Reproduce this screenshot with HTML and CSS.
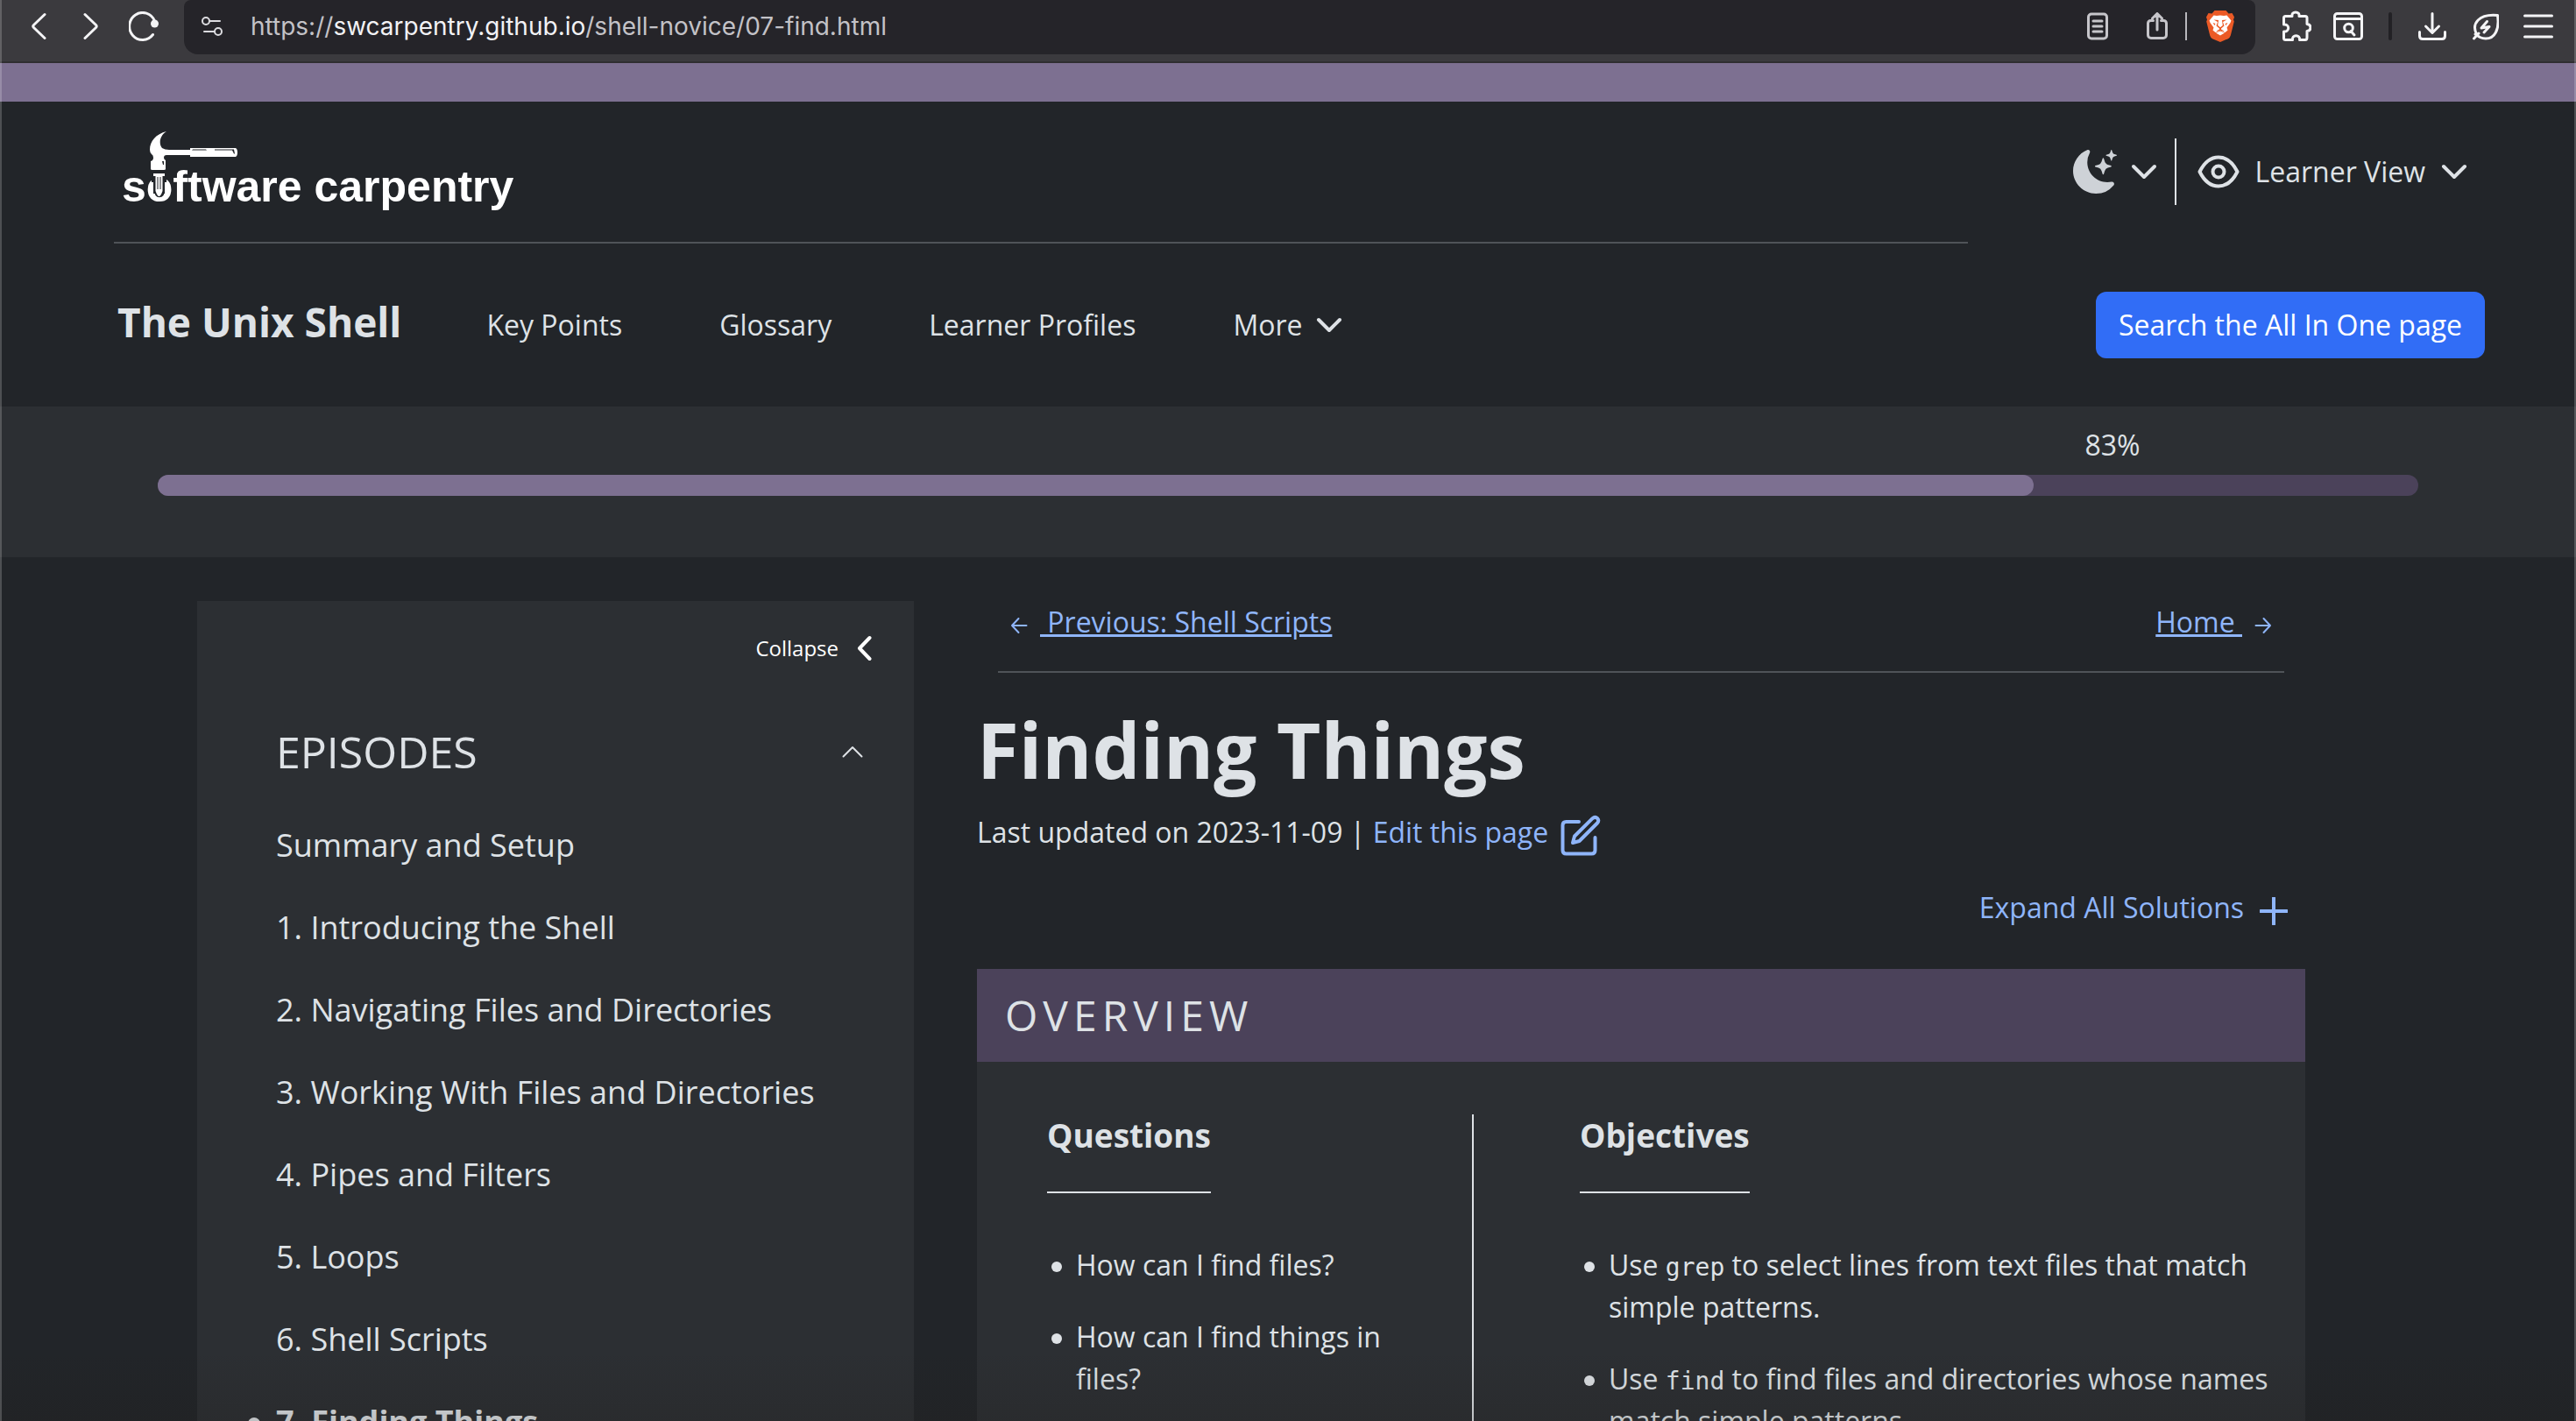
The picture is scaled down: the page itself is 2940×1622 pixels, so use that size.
FILE: index.html
```html
<!DOCTYPE html>
<html lang="en">
<head>
<meta charset="utf-8">
<meta name="viewport" content="width=device-width, initial-scale=1">
<title>The Unix Shell: Finding Things</title>
<link rel="stylesheet" href="styles.css">
</head>
<body>
<div class="window">
  <div class="toolbar">
    <div class="toolbar-nav">
      <button class="tool" aria-label="Back"><svg width="18" height="32" viewBox="0 0 18 32"><path d="M16 2.500 3.500 14.500q-1.500 1.500 0 3L16 29.500"/></svg></button>
      <button class="tool" aria-label="Forward"><svg width="18" height="32" viewBox="0 0 18 32"><path d="M2 2.500 14.500 14.500q1.500 1.500 0 3L2 29.500"/></svg></button>
      <button class="tool" aria-label="Reload"><svg width="34" height="34" viewBox="0 0 34 34"><path d="M27.500 26.500A15 15.500 0 1 1 29.500 11"/><circle class="solid" cx="29.500" cy="14" r="4.500"/></svg></button>
    </div>
    <div class="address">
      <svg class="site" width="24" height="24" viewBox="0 0 24 24" aria-hidden="true"><circle cx="5" cy="6" r="4"/><path d="M9 6h12M3 18h12"/><circle cx="19" cy="18" r="4"/></svg>
      <span class="url">https://<span class="domain">swcarpentry.github.io</span>/shell-novice/07-find.html</span>
      <div class="address-tools">
        <button class="tool dim reader" aria-label="Reader mode"><svg width="24" height="32" viewBox="0 0 24 32"><rect x="1.500" y="2" width="21" height="28" rx="3.500"/><path d="M7 10h10M7 16h10M7 22h10"/></svg></button>
        <button class="tool dim share" aria-label="Share"><svg width="24" height="32" viewBox="0 0 24 32"><path d="M7.500 9.500H4.500a3 3 0 0 0-3 3v13.500a3.500 3.500 0 0 0 3.500 3.500h14a3.500 3.500 0 0 0 3.500-3.500V12.500a3 3 0 0 0-3-3h-3M12 20V1.500M6.500 7 12 1.500 17.500 7"/></svg></button>
        <span class="rule-light"></span>
        <button class="tool brave" aria-label="Brave Shields"><svg width="32" height="36" viewBox="0 0 32 36"><path fill="#eb5a26" d="M9.500 0h13l3 3.500 4-.5L32 7.500l-1 3 .8 2-4 16Q27 31 25 32.200L16 36l-9-3.800Q5 31 4.200 28.500l-4-16 .8-2-1-3L2.500 3l4 .5z"/><path fill="#fff" d="M8.500 5.500 12 6l4-.5 4 .5 3.500-.5 5 6-1 2.500-4 5.500 1 3-3 2.500-3.300-1.200L16 22l-2.200 1.800-3.300 1.200-3-2.500 1-3-4-5.500-1-2.500z"/><path fill="#fff" d="M16 23.500 21 25.500 16 28.500 11 25.500z"/><path fill="#eb5a26" d="M8.500 10.500 14 11l-.8 6 2.800 2.200L18.800 17l-.8-6 5.500-.5L19 13l1.500 4.500L17 20.500v1L20 23l-.5.800L16 22.500l-3.500 1.300L12 23l3-1.500v-1l-3.500-3L13 13zM7.500 14l3 1-1 2zM24.500 14l-3 1 1 2z"/></svg></button>
      </div>
    </div>
    <div class="toolbar-end">
      <button class="tool puzzle" aria-label="Extensions"><svg width="34" height="36" viewBox="0 0 34 36"><path d="M2.500 8.500q0-2 2-2h7.500c-.5-2.500 1-4.500 4-4.500s4.500 2 4 4.500h7q2 0 2 2v7c2.500.200 4 1.800 4 4s-1.500 3.800-4 4v7q0 3-2 3h-6.500c.5-3-1.500-4.800-4-4.800s-4.500 1.800-4 4.800h-8q-2 0-2-2v-7.500c3 .5 5.200-1.500 5.200-4s-2.200-4.500-5.200-4z"/></svg></button>
      <button class="tool tabsearch" aria-label="Search tabs"><svg width="34" height="32" viewBox="0 0 34 32"><rect x="1.500" y="1.500" width="31" height="29" rx="3"/><path d="M2 7.500h30M20 21.500l4 4.500"/><circle cx="17.500" cy="18" r="4.800"/></svg></button>
      <span class="rule-dark"></span>
      <button class="tool download" aria-label="Downloads"><svg width="32" height="32" viewBox="0 0 32 32"><path d="M16 1.500V23M8.500 16 16 23.500 23.500 16M1.500 22.500V27q0 3.500 3.500 3.500h22q3.500 0 3.500-3.500v-4.500"/></svg></button>
      <button class="tool leaf" aria-label="Energy saver"><svg width="30" height="32" viewBox="0 0 30 32"><path d="M28.500 3.500C31 20 25 30 15 30 10 30 6.500 28 4.500 25-1.500 13 7 1.500 28.500 3.500zM7 24l-5.500 6M3 25l4.500 3"/><path d="M16.500 10.500 10 18l9-1.500-6 6.500"/></svg></button>
      <button class="tool menu" aria-label="Menu"><svg width="34" height="28" viewBox="0 0 34 28"><path d="M1.500 2h31M1.500 14h31M1.500 26h31"/></svg></button>
    </div>
  </div>

  <div class="page">
    <div class="band"></div>
    <header class="header">
      <div class="header-top">
        <a class="logo" href="#" aria-label="Software Carpentry">
          <svg width="480" height="100" viewBox="130 146 480 100">
            <text x="139" y="230">software carpentry</text>
            <path class="cut" d="M173 196h17v12h-2v13h-13v-13h-2z"/>
            <path class="fill" d="M175 198h13v3h-2.500v17q-2 6-4 6t-4-6v-17H175z"/>
            <path class="cut" d="M179.500 202h1v14h-1zM182.500 202h1v14h-1z"/>
            <path class="fill" d="M190 150c-8 5-9 14-5 19q3 2 8 2h24v-2h52q2 1 2 5t-2 5h-52v-2h-27q-3 0-3 3 0 2 2 3v10q0 1-2 1h-13q-2 0-2-1v-9q3-1 3-4 0-3-2-4-2-2-2-5c0-10 7-18 19-21z"/>
            <path class="cut" d="M220 170.500h15l1 1h-17zM245 170.500h22l1 5h-1l-2-4h-20zM185 184h2v4h-1z"/>
          </svg>
        </a>
        <div class="controls">
          <button class="control theme" aria-label="Toggle theme">
            <svg class="moon" width="50" height="50" viewBox="0 0 16 16"><path d="M6 .278a.77.770 0 0 1 .080.858 7.200 7.200 0 0 0-.878 3.460c0 4.021 3.278 7.277 7.318 7.277q.792-.001 1.533-.160a.79.790 0 0 1 .810.316.73.730 0 0 1-.031.893A8.350 8.350 0 0 1 8.344 16C3.734 16 0 12.286 0 7.710 0 4.266 2.114 1.312 5.124.060A.75.750 0 0 1 6 .278"/><path d="M10.794 3.148a.217.217 0 0 1 .412 0l.387 1.162c.173.518.579.924 1.097 1.097l1.162.387a.217.217 0 0 1 0 .412l-1.162.387a1.730 1.730 0 0 0-1.097 1.097l-.387 1.162a.217.217 0 0 1-.412 0l-.387-1.162A1.730 1.730 0 0 0 9.310 6.593l-1.162-.387a.217.217 0 0 1 0-.412l1.162-.387a1.730 1.730 0 0 0 1.097-1.097zM13.863.099a.145.145 0 0 1 .274 0l.258.774c.115.346.386.617.732.732l.774.258a.145.145 0 0 1 0 .274l-.774.258a1.160 1.160 0 0 0-.732.732l-.258.774a.145.145 0 0 1-.274 0l-.258-.774a1.160 1.160 0 0 0-.732-.732l-.774-.258a.145.145 0 0 1 0-.274l.774-.258c.346-.115.617-.386.732-.732z"/></svg>
            <svg class="chevron" width="30" height="20" viewBox="0 0 30 20"><path d="M3 4 15 16 27 4"/></svg>
          </button>
          <span class="divider"></span>
          <button class="control view">
            <svg class="eye" width="48" height="38" viewBox="0 0 48 38"><path d="M2.500 19C8 8 15 2.500 24 2.500S40 8 45.500 19C40 30 33 35.500 24 35.500S8 30 2.500 19z"/><circle cx="24" cy="19" r="6.500"/></svg>
            <span>Learner View</span>
            <svg class="chevron" width="30" height="20" viewBox="0 0 30 20"><path d="M3 4 15 16 27 4"/></svg>
          </button>
        </div>
      </div>
      <hr class="header-rule">
      <nav class="header-nav">
        <a class="lesson" href="#">The Unix Shell</a>
        <div class="links">
          <a href="#">Key Points</a>
          <a href="#">Glossary</a>
          <a href="#">Learner Profiles</a>
          <button class="control more"><span>More</span><svg class="chevron" width="30" height="20" viewBox="0 0 30 20"><path d="M3 4 15 16 27 4"/></svg></button>
        </div>
        <button class="search">Search the All In One page</button>
      </nav>
    </header>

    <div class="progress">
      <div class="percent">83%</div>
      <div class="bar" role="progressbar" aria-valuenow="83" aria-valuemin="0" aria-valuemax="100" aria-label="Lesson progress"><div class="bar-fill" style="width:83%"></div></div>
    </div>

    <div class="columns">
      <aside class="sidebar">
        <button class="collapse"><span>Collapse</span><svg width="18" height="30" viewBox="0 0 18 30"><path d="M15.500 3 4 15 15.500 27"/></svg></button>
        <button class="episodes"><span>EPISODES</span><svg width="24" height="14" viewBox="0 0 24 14"><path d="M1.500 12.500 12 2 22.500 12.500"/></svg></button>
        <ul class="chapters">
          <li><a href="#">Summary and Setup</a></li>
          <li><a href="#">1. Introducing the Shell</a></li>
          <li><a href="#">2. Navigating Files and Directories</a></li>
          <li><a href="#">3. Working With Files and Directories</a></li>
          <li><a href="#">4. Pipes and Filters</a></li>
          <li><a href="#">5. Loops</a></li>
          <li><a href="#">6. Shell Scripts</a></li>
          <li class="current"><a href="#" aria-current="page">7. Finding Things</a></li>
        </ul>
      </aside>

      <main class="content">
        <nav class="pager">
          <a href="#"><svg class="arrow" width="20" height="20" viewBox="0 0 20 20"><path d="M18.500 10H2M9.500 2 2 10 9.500 18"/></svg><span class="label"> Previous: Shell Scripts</span></a>
          <a href="#"><span class="label">Home </span><svg class="arrow" width="20" height="20" viewBox="0 0 20 20"><path d="M1.500 10H18M10.500 2 18 10 10.500 18"/></svg></a>
        </nav>
        <h1>Finding Things</h1>
        <p class="updated">Last updated on 2023-11-09 | <a href="#">Edit this page<svg width="46" height="48" viewBox="0 0 46 48"><path d="M21 9H6.500Q2.500 9 2.500 13v28.500q0 4 4 4h29q4 0 4-4V27"/><path d="M36.500 5.200q3-2.700 5.500-.2t0 5.500L21.500 31l-7.500 2 2-7.500z"/></svg></a></p>
        <button class="expand"><span>Expand All Solutions</span><svg width="32" height="32" viewBox="0 0 32 32"><path d="M16 1v30M1 16h30"/></svg></button>
        <section class="overview">
          <h2>OVERVIEW</h2>
          <div class="overview-body">
            <div class="questions">
              <h3>Questions</h3>
              <ul>
                <li>How can I find files?</li>
                <li>How can I find things in files?</li>
              </ul>
            </div>
            <div class="objectives">
              <h3>Objectives</h3>
              <ul>
                <li>Use <code>grep</code> to select lines from text files that match simple patterns.</li>
                <li>Use <code>find</code> to find files and directories whose names match simple patterns.</li>
              </ul>
            </div>
          </div>
        </section>
      </main>
    </div>
  </div>
</div>
</body>
</html>
```
FILE: styles.css
```css
:root {
  --bg: #222529;
  --panel: #2c2f33;
  --text: #dee2e6;
  --link: #8fb5fa;
  --purple: #7d7091;
  --purple-dark: #4b425a;
}

* { box-sizing: border-box; }

body {
  margin: 0;
  background: var(--bg);
  color: var(--text);
  font: 32px/48px "Open Sans", "Noto Sans", sans-serif;
}

a { color: inherit; text-decoration: none; }

button {
  margin: 0;
  padding: 0;
  border: 0;
  background: none;
  color: inherit;
  font: inherit;
}

svg { display: block; flex: none; fill: none; stroke-linecap: round; stroke-linejoin: round; }

ul { margin: 0; padding: 0; list-style: none; }

.window {
  position: relative;
  display: flex;
  flex-direction: column;
  height: 100vh;
  overflow: hidden;
}

/* light window edges and the dimmed lower edge */
.window::before {
  content: "";
  position: absolute;
  inset: 0;
  z-index: 2;
  border: solid rgba(255, 255, 255, 0.2);
  border-width: 0 2px;
  pointer-events: none;
}

.window::after {
  content: "";
  position: absolute;
  inset: auto 0 0;
  height: 80px;
  background: linear-gradient(transparent, rgba(30, 25, 20, 0.16));
  pointer-events: none;
}

/* browser toolbar */
.toolbar {
  display: flex;
  flex: none;
  height: 72px;
  border-bottom: 2px solid #2f2e31;
  background: #3b3a3e;
  color: #f4f4f6;
}

.toolbar-nav {
  display: grid;
  grid-template-columns: repeat(3, 60px);
  height: 60px;
  margin: 0 16px 0 14px;
}

.tool { display: grid; place-items: center; }
.tool svg { stroke: currentColor; stroke-width: 3; }
.tool .solid { fill: currentColor; stroke: none; }
.dim { color: #c6c5ca; }
.brave svg { stroke: none; }

.address {
  display: flex;
  flex: 1;
  align-items: center;
  height: 62px;
  padding: 0 24px 2px 20px;
  border-radius: 8px 8px 16px 16px;
  background: #252429;
}

.site { stroke: #dcdce0; stroke-width: 2; }

.url {
  flex: 1;
  margin-left: 32px;
  color: #c3c2c7;
  font: 28px/40px Inter, "Liberation Sans", sans-serif;
}

.domain { color: #f2f2f5; }

.address-tools, .toolbar-end { display: flex; align-items: center; }
.share { margin: 0 20px 0 44px; }
.rule-light { width: 2px; height: 32px; margin-right: 22px; background: #b9b8bd; }

.toolbar-end { height: 60px; padding: 0 26px 0 30px; }
.tabsearch { margin-left: 25px; }
.rule-dark { width: 4px; height: 32px; margin: 0 30px 0 29px; border-radius: 2px; background: #222125; }
.leaf { margin: 0 28px 0 30px; }

/* lesson header */
.page { flex: 1; min-height: 0; }
.band { height: 44px; background: var(--purple); }
.header { padding: 0 104px 0 130px; }

.header-top {
  display: flex;
  align-items: center;
  justify-content: space-between;
  height: 160px;
}

.logo text { fill: #fff; font: bold 50px "Liberation Sans", Arial, sans-serif; }
.logo .fill { fill: #fff; }
.logo .cut { fill: var(--bg); }

.controls { display: flex; align-items: center; padding-right: 20px; }
.control { display: flex; align-items: center; }
.chevron { stroke: var(--text); stroke-width: 4; }
.theme { gap: 16px; }
.moon { fill: #ced2d7; }
.divider { width: 2px; height: 76px; margin: 0 24px 0 20px; background: var(--text); }
.eye { margin-right: 18px; stroke: var(--text); stroke-width: 4; }
.view .chevron { margin-left: 18px; }

.header-rule {
  width: 78.2%;
  height: 2px;
  margin: 0;
  border: 0;
  background: #4f5358;
}

.header-nav {
  display: flex;
  align-items: center;
  height: 186px;
  padding-left: 4px;
}

.lesson {
  padding-bottom: 8px;
  font-size: 46px;
  font-weight: 700;
  line-height: 64px;
}

.links { display: flex; gap: 111px; margin-left: 97px; }
.more { gap: 16px; }

.search {
  height: 76px;
  margin-left: auto;
  padding: 0 26px;
  border-radius: 12px;
  background: #316df6;
  color: #fff;
}

/* progress */
.progress { padding: 20px 180px 70px; background: var(--panel); }
.percent { margin-left: 83%; padding-left: 58px; }
.bar { height: 24px; margin-top: 10px; border-radius: 12px; background: var(--purple-dark); }
.bar-fill { height: 24px; border-radius: 12px; background: var(--purple); }

/* two columns */
.columns {
  display: grid;
  grid-template-columns: 818fr 1516fr;
  gap: 72px;
  padding: 50px 309px 0 225px;
}

.sidebar { padding: 30px 0 48px 90px; background: var(--panel); }

.collapse {
  display: flex;
  align-items: center;
  gap: 20px;
  margin: 0 48px 0 auto;
  color: #fff;
  font-size: 24px;
  line-height: 48px;
}

.collapse svg { stroke: #fff; stroke-width: 4; }

.episodes {
  display: flex;
  align-items: center;
  justify-content: space-between;
  width: 100%;
  margin: 58px 0 24px;
  padding-right: 58px;
  font-size: 50px;
  line-height: 72px;
}

.episodes svg { stroke: var(--text); stroke-width: 2; }

.chapters { font-size: 36px; line-height: 94px; }
.current { position: relative; font-weight: 700; }

.current::before {
  content: "";
  position: absolute;
  top: 42px;
  left: -32px;
  width: 14px;
  height: 14px;
  border-radius: 7px;
  background: currentColor;
}

/* content */
.pager {
  display: flex;
  justify-content: space-between;
  margin: 0 24px;
  padding: 0 14px 32px;
  border-bottom: 2px solid #4f5358;
  color: var(--link);
}

.pager a { display: flex; gap: 14px; }

.label {
  white-space: pre;
  text-decoration: underline 3px;
  text-underline-offset: 2px;
}

.arrow { margin-top: 18px; stroke: var(--link); stroke-width: 2; }

h1 { margin: 35px 0 19px; font-size: 87px; font-weight: 700; line-height: 104px; }

.updated { display: flex; height: 48px; margin: 0; white-space: pre; }
.updated a { display: flex; gap: 14px; color: var(--link); }
.updated svg { margin-top: 3px; stroke: var(--link); stroke-width: 4; }

.expand {
  display: flex;
  align-items: center;
  gap: 18px;
  margin: 38px 20px 46px auto;
  color: var(--link);
}

.expand svg { margin-top: 8px; stroke: var(--link); stroke-width: 4; }

h2 {
  margin: 0;
  padding: 0 32px;
  background: var(--purple-dark);
  font-size: 48px;
  font-weight: 400;
  letter-spacing: 6px;
  line-height: 106px;
}

.overview-body {
  display: grid;
  grid-template-columns: 567fr 949fr;
  padding: 60px 0;
  background: var(--panel);
}

.questions { padding: 0 80px; border-right: 2px solid var(--text); }
.objectives { padding: 0 32px 0 121px; }

h3 {
  width: fit-content;
  margin: 0 0 58px;
  padding-bottom: 40px;
  border-bottom: 2px solid var(--text);
  font-size: 37px;
  font-weight: 700;
  line-height: 48px;
}

.overview li { position: relative; margin-bottom: 34px; padding-left: 33px; }

.overview li::before {
  content: "";
  position: absolute;
  top: 20px;
  left: 5px;
  width: 12px;
  height: 12px;
  border-radius: 6px;
  background: currentColor;
}

code { font: 28px/40px "DejaVu Sans Mono", "Liberation Mono", monospace; }
```
